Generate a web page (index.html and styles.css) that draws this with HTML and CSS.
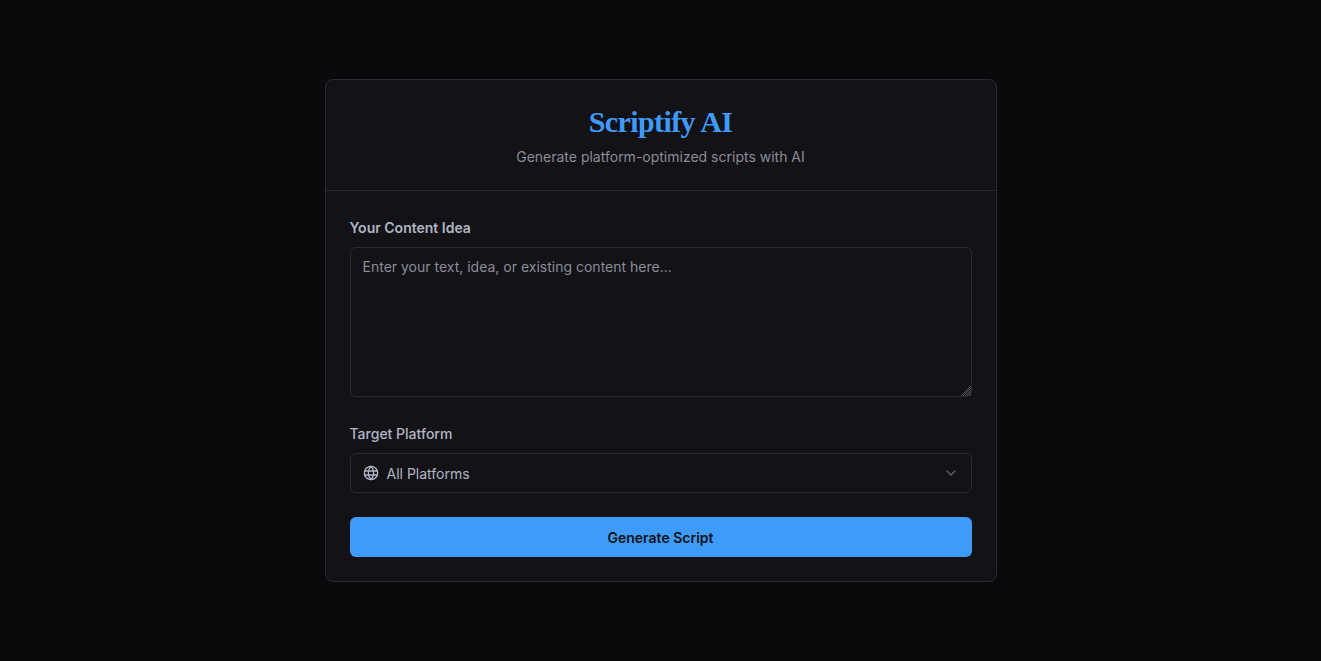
FILE: index.html
```html
<!DOCTYPE html>
<html lang="en">
<head>
<meta charset="utf-8">
<title>Scriptify AI</title>
<link rel="stylesheet" href="styles.css">
</head>
<body>
<main class="card">
  <header class="card-header">
    <h1 class="title">Scriptify AI</h1>
    <p class="subtitle">Generate platform-optimized scripts with AI</p>
  </header>
  <form class="card-body">
    <div class="field">
      <label class="label label-strong" for="idea">Your Content Idea</label>
      <textarea class="textarea" id="idea" placeholder="Enter your text, idea, or existing content here..."></textarea>
    </div>
    <div class="field">
      <label class="label">Target Platform</label>
      <div class="select">
        <svg class="globe" viewBox="0 0 24 24" fill="none" stroke="currentColor" stroke-width="2" stroke-linecap="round" stroke-linejoin="round"><circle cx="12" cy="12" r="10"/><path d="M12 2a14.5 14.5 0 0 0 0 20 14.5 14.5 0 0 0 0-20"/><path d="M3 9h18"/><path d="M3 15h18"/></svg>
        <span class="select-text">All Platforms</span>
        <svg class="chevron" viewBox="0 0 24 24" fill="none" stroke="currentColor" stroke-width="2" stroke-linecap="round" stroke-linejoin="round"><path d="m6 9 6 6 6-6"/></svg>
      </div>
    </div>
    <button class="button" type="button">Generate Script</button>
  </form>
</main>
</body>
</html>
```
FILE: styles.css
```css
* { box-sizing: border-box; }
html, body { height: 100%; }
body {
  margin: 0;
  background: #0a0a0c;
  font-family: Inter, sans-serif;
  display: flex;
  justify-content: center;
  padding-top: 79px;
}
.card {
  width: 672px;
  height: 503px;
  background: #121217;
  border: 1px solid #2a2a32;
  border-radius: 8px;
}
.card-header {
  height: 111px;
  padding-top: 24px;
  border-bottom: 1px solid #2a2a32;
  text-align: center;
}
.title {
  margin: 0 0 7px;
  font-family: "Liberation Serif", serif;
  font-size: 30px;
  line-height: 36px;
  font-weight: 700;
  letter-spacing: -0.6px;
  color: #3e9bf9;
}
.subtitle {
  margin: 0;
  font-size: 14px;
  line-height: 20px;
  color: #8b8d98;
}
.card-body {
  padding: 24px;
  display: flex;
  flex-direction: column;
  gap: 24px;
}
.field { display: flex; flex-direction: column; gap: 6px; }
.label {
  font-size: 14px;
  line-height: 26px;
  font-weight: 500;
  color: #b0b6c4;
}
.label-strong { font-weight: 600; color: #b0b6c4; }
.textarea {
  display: block;
  width: 100%;
  height: 150px;
  padding: 9px 12px;
  background: transparent;
  border: 1px solid #2a2a32;
  border-radius: 6px;
  font-family: Inter, sans-serif;
  font-size: 14px;
  line-height: 20px;
  color: #b4b8c4;
  outline: none;
}
.textarea::placeholder { color: #8b8d98; opacity: 1; }
.textarea::-webkit-resizer {
  background:
    linear-gradient(135deg, #121217 60%, transparent 60%),
    repeating-conic-gradient(#54565f 0 25%, #121217 0 50%) 0 0 / 2px 2px;
}
.select {
  height: 40px;
  padding: 0 12px;
  display: flex;
  align-items: center;
  border: 1px solid #2a2a32;
  border-radius: 6px;
  font-size: 14px;
  color: #b0b6c4;
}
.globe { width: 16px; height: 16px; margin-right: 8px; flex: none; }
.select-text { flex: 1; }
.chevron { width: 16px; height: 16px; flex: none; color: #5c5e68; }
.button {
  height: 40px;
  width: 100%;
  border: 0;
  border-radius: 6px;
  background: #3e9bf9;
  color: #121217;
  font-family: Inter, sans-serif;
  font-size: 14px;
  font-weight: 600;
}
```
